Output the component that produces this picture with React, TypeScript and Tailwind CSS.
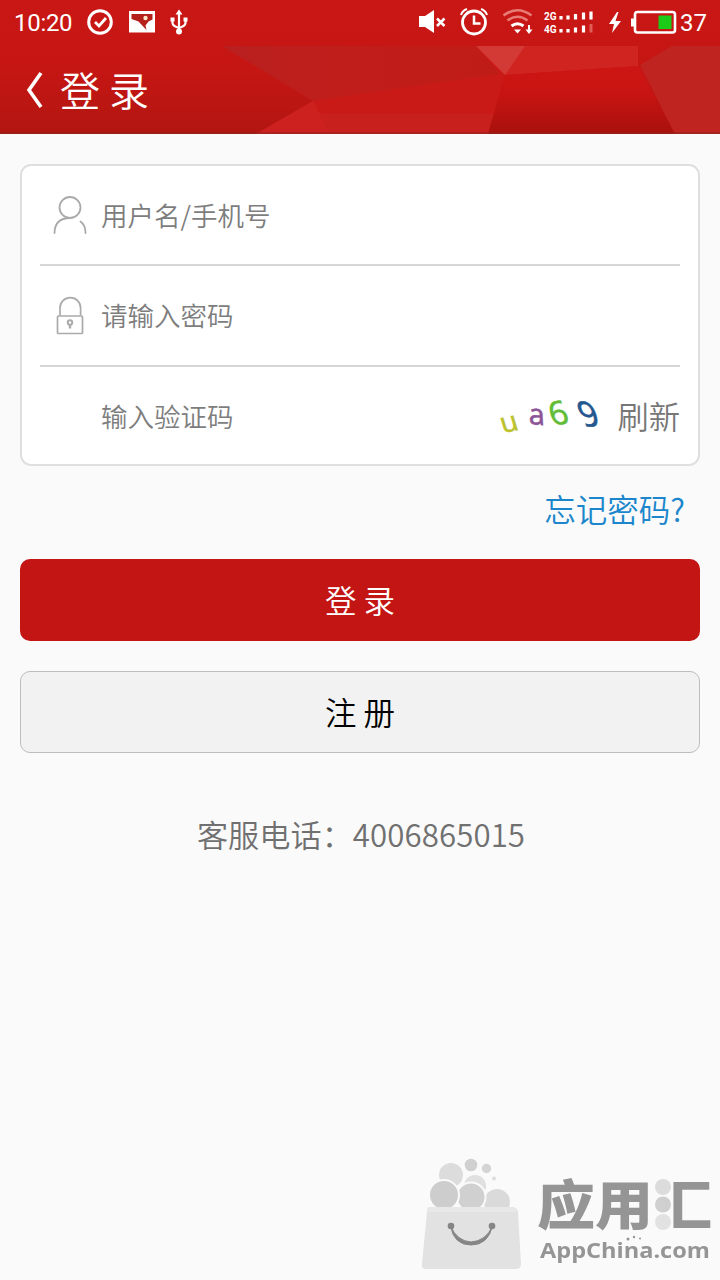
import { useState } from "react";

const HeaderBackground = () => (
  <svg className="absolute inset-0 w-full h-full" viewBox="0 0 720 134" preserveAspectRatio="none">
    <defs>
      <linearGradient id="base" x1="0" y1="0" x2="0" y2="1">
        <stop offset="0" stopColor="#c81715" />
        <stop offset="0.5" stopColor="#c61614" />
        <stop offset="1" stopColor="#b21611" />
      </linearGradient>
      <linearGradient id="shade" x1="0" y1="0" x2="1" y2="0">
        <stop offset="0" stopColor="#b8201f" />
        <stop offset="0.4" stopColor="#c01e1b" />
        <stop offset="1" stopColor="#c01c17" />
      </linearGradient>
      <linearGradient id="dark" x1="0" y1="0" x2="0" y2="1">
        <stop offset="0" stopColor="#cd1614" />
        <stop offset="0.4" stopColor="#c81412" />
        <stop offset="1" stopColor="#a8110d" />
      </linearGradient>
    </defs>
    <rect width="720" height="134" fill="url(#base)" />
    <path d="M222 46H476L505 75L488 134H256L313 101Z" fill="#c91a17" />
    <path d="M222 46H476L500 74L400 88L313 101Z" fill="url(#shade)" />
    <path d="M313 101L320 114H494L488 134H256Z" fill="#c8201c" />
    <path d="M313 101L330 134H256Z" fill="#cc211e" />
    <path d="M524 46H638V66L505 75Z" fill="#d02421" />
    <path d="M505 75L638 66L675 134H488Z" fill="url(#dark)" />
    <path d="M476 46H525L505 75Z" fill="#d33a36" />
    <path d="M672 46H720V134H675L640 65Z" fill="#c02420" />
    <rect y="132" width="720" height="2" fill="#93231d" fillOpacity="0.6" />
  </svg>
);

const StatusIcons = () => (
  <svg className="absolute left-0 top-0" width="720" height="46" viewBox="0 0 720 46" fill="none" stroke="#fff">
    {/* check, picture, usb */}
    <circle cx="100" cy="22" r="11.3" strokeWidth="3" />
    <path d="M95 22l4 4 7-8" strokeWidth="2.8" />
    <path d="M129 11h26v21.500h-26z" fill="#fff" stroke="none" />
    <path d="M131.500 14h21v5.500l-4 2-3 4 1 4.500-8-8.500-7-2.500z" fill="#b5201d" stroke="none" />
    <circle cx="145.500" cy="18" r="2.200" fill="#ffe6c8" stroke="none" />
    <path d="M179 12v20M172.500 19v4q0 3 6.500 5M185.500 19v4q0 3-6.500 5" strokeWidth="2.200" />
    <path d="M179 9.500l3.500 5h-7z" fill="#fff" stroke="none" />
    <circle cx="179" cy="31.500" r="3" fill="#fff" stroke="none" />
    <path d="M170.500 17.500h4v4h-4zM183.500 17.500h4v4h-4z" fill="#fff" stroke="none" />
    {/* mute, alarm */}
    <path d="M419 16h6l9-6v23l-9-6h-6z" fill="#fff" stroke="none" />
    <path d="M437 18.500l7.500 7.500M444.500 18.500l-7.500 7.500" strokeWidth="2.500" />
    <circle cx="474" cy="22.500" r="11.500" strokeWidth="2.800" />
    <path d="M474 15.500v8h6.500" strokeWidth="2.500" />
    <path d="M461 15q1.500-4.500 6-6M487 15q-1.500-4.500-6-6" strokeWidth="2" />
    {/* wifi */}
    <path d="M503.500 15.500q14-10.500 28 0M507.500 20.500q10-7.500 20 0" stroke="#e77b75" strokeWidth="2.600" />
    <path d="M511.500 26q6-4.500 12 0" strokeWidth="3" />
    <path d="M514 29.500h7l-3.500 4z" fill="#fff" stroke="none" />
    <path d="M529 25v5" strokeWidth="2" />
    <path d="M525.500 29.500h7l-3.500 4.500z" fill="#fff" stroke="none" />
    {/* signal bars */}
    <path d="M561 16v3.500M568 15.500v4M575.500 14v5.500M583.500 12.500v7M591 11.500v8M561 29v3.500M568 29v3.500M575.500 27.500v5M583.500 25.500v7" strokeWidth="3.200" />
    <path d="M591 24v8.500" stroke="#e05d58" strokeWidth="3" />
    {/* charging and battery */}
    <path d="M617 12l-8 12h5l-2 9 9-12h-5.500l3-9z" fill="#fff" stroke="none" />
    <rect x="635" y="12" width="40" height="20.500" rx="2.500" strokeWidth="2.600" />
    <path d="M631 18.500h3v8h-3z" fill="#fff" stroke="none" />
    <path d="M658.500 15.500h13v13.500h-13z" fill="#1ccb18" stroke="none" />
  </svg>
);

const UserIcon = () => (
  <svg width="34" height="40" viewBox="0 0 34 40" fill="none" stroke="#aaa" strokeWidth="1.800" strokeLinecap="round">
    <circle cx="17" cy="12.500" r="10.500" />
    <path d="M1.500 38Q1.800 23 17 23M27.500 26.500Q32.500 30 32.500 38" />
  </svg>
);

const LockIcon = () => (
  <svg width="28" height="40" viewBox="0 0 28 40" fill="none" stroke="#aaa" strokeWidth="1.700">
    <path d="M4 20.500V13a10.300 10.300 0 0 1 20.600 0v7.500" />
    <rect x="1.500" y="21" width="25" height="17.500" rx="1" />
    <circle cx="14" cy="27.500" r="2.200" strokeWidth="2" />
    <path d="M14 29.500v4" strokeWidth="2.400" />
  </svg>
);

const Captcha = () => (
  <svg width="118" height="70" viewBox="0 0 118 70" className="shrink-0 font-['Noto_Sans']" strokeWidth="0.5">
    <text transform="translate(4 52) rotate(-11) skewX(6)" fontSize="28" fill="#bcc22c" stroke="#bcc22c">u</text>
    <text transform="translate(30 43) rotate(5) skewX(8)" fontSize="29" fill="#8d5598" stroke="#8d5598">a</text>
    <text transform="translate(53 44) rotate(-4) skewX(12)" fontSize="33" fill="#62bd36" stroke="#62bd36">6</text>
    <text transform="translate(84 45) rotate(4) skewX(24)" fontSize="34" fill="#25578f" stroke="#25578f">9</text>
  </svg>
);

const BagLogo = () => (
  <svg width="104" height="114" viewBox="0 0 104 114">
    <circle cx="31" cy="17" r="12" fill="#dcdcdc" />
    <circle cx="51" cy="7" r="6.300" fill="#d0d0d0" />
    <circle cx="66.500" cy="10.500" r="4.700" fill="#d4d4d4" />
    <circle cx="74" cy="20.500" r="2" fill="#ddd" />
    <circle cx="55" cy="28" r="11" fill="#e0e0e0" />
    <circle cx="77" cy="44" r="14" fill="#dadada" stroke="#fafafa" strokeWidth="2" />
    <circle cx="51" cy="39" r="14.500" fill="#d0d0d0" stroke="#fafafa" strokeWidth="2" />
    <circle cx="24" cy="37" r="15" fill="#cdcdcd" stroke="#fafafa" strokeWidth="2" />
    <path d="M10 49H91Q97 49 98 54L101 106Q101 111 96 111H6Q1 111 2 106L7 54Q7 49 10 49Z" fill="#e2e2e2" />
    <path d="M10 49H92Q94 49 96 51V54H7Z" fill="#e8e8e8" />
    <circle cx="31" cy="68" r="3.300" fill="#858585" />
    <circle cx="72" cy="68" r="3.300" fill="#858585" />
    <path d="M30.500 68Q34 87 51 87Q68 87 72.500 68Q66 83 51 84Q37 83 30.500 68Z" fill="#858585" stroke="#858585" />
  </svg>
);

const Watermark = () => (
  <div className="flex h-[122px] pl-[420px] text-[#959595]">
    <BagLogo />
    <div className="relative ml-[13px] pt-[15px]">
      <div className="flex h-[58px] origin-center scale-y-[0.93] items-center text-[58px] leading-[58px] font-black">
        <span>应用</span>
        <span className="bg-[linear-gradient(90deg,transparent_34%,#959595_34%)] bg-clip-text pl-px text-transparent">汇</span>
      </div>
      <svg className="absolute left-[117px] top-5" width="20" height="56" viewBox="0 0 20 56">
        <circle cx="9" cy="9" r="8" fill="#dcdcdc" />
        <circle cx="9" cy="26.500" r="8" fill="#cfcfcf" />
        <circle cx="9" cy="44" r="8" fill="#e2e2e2" />
      </svg>
      <div className="mt-1 whitespace-nowrap pl-[3px] font-['Open_Sans'] text-[22px] leading-7 font-bold">
        <span className="inline-block origin-left scale-x-[1.07]">AppChina.com</span>
      </div>
      <svg className="absolute left-[88px] top-[77px]" width="20" height="6" viewBox="0 0 20 6" fill="#959595">
        <circle cx="3" cy="4" r="1.500" />
        <circle cx="9" cy="2" r="1.200" />
        <circle cx="15" cy="3.500" r="1" />
      </svg>
    </div>
  </div>
);

export default function App() {
  const [username, setUsername] = useState("");
  const [password, setPassword] = useState("");
  const [code, setCode] = useState("");

  const inputClass =
    "min-w-0 flex-1 bg-transparent pl-px text-[26.500px] font-[350] text-[#555] outline-none placeholder:text-[#7d7d7d]";

  return (
    <div className="flex h-[1280px] w-[720px] flex-col overflow-hidden bg-[#fafafa] font-['Noto_Sans_CJK_SC',sans-serif]">
      {/* Header */}
      <header className="relative h-[134px] shrink-0 text-white">
        <HeaderBackground />
        <StatusIcons />
        <div className="relative flex h-[46px] items-center justify-between pl-[14px] pr-[13px] font-[Roboto] text-[24px]">
          <span className="tracking-[-0.3px]">10:20</span>
          <div className="flex items-center">
            <span className="mr-[124px] flex w-3 flex-col text-[10px] leading-[13px] font-bold">
              <span>2G</span>
              <span>4G</span>
            </span>
            <span className="w-[27px]">37</span>
          </div>
        </div>
        <div className="relative flex h-[88px] items-center pl-6">
          <svg width="20" height="38" viewBox="0 0 20 38" fill="none" stroke="#fff" strokeWidth="3.600">
            <path d="M17 2L5 19L17 36" />
          </svg>
          <h1 className="ml-4 pb-[3px] text-[40px] font-[350]">登 录</h1>
        </div>
      </header>

      {/* Login form */}
      <main className="px-5 pt-[30px]">
        <div className="h-[302px] rounded-[11px] border-2 border-[#dfdfdf] bg-white px-[18px]">
          <div className="flex h-[99.500px] items-center border-b-2 border-[#d6d6d6]">
            <span className="flex w-[60px] justify-center">
              <UserIcon />
            </span>
            <input className={inputClass} placeholder="用户名/手机号" value={username} onChange={(e) => setUsername(e.target.value)} />
          </div>
          <div className="flex h-[101px] items-center border-b-2 border-[#d6d6d6]">
            <span className="flex w-[60px] justify-center">
              <LockIcon />
            </span>
            <input className={inputClass} type="password" placeholder="请输入密码" value={password} onChange={(e) => setPassword(e.target.value)} />
          </div>
          <div className="flex h-[99px] items-center pl-[60px]">
            <input className={inputClass} placeholder="输入验证码" value={code} onChange={(e) => setCode(e.target.value)} />
            <Captcha />
            <button className="text-[31.300px] font-[350] text-[#777]">刷新</button>
          </div>
        </div>

        <div className="flex h-[93px] items-center justify-end pr-[15px]">
          <a href="#" className="pb-2 text-[31.500px] font-[350] text-[#1b86cb]">
            忘记密码?
          </a>
        </div>

        <button className="block h-[82px] w-full rounded-[10px] bg-[#c31513] text-[31.500px] font-[350] text-white">登 录</button>
        <button className="mt-[30px] block h-[82px] w-full rounded-[10px] border border-[#bdbdbd] bg-[#f2f2f2] text-[31.500px] font-[350] text-black">注 册</button>

        <p className="mt-[58px] pl-0.5 text-center text-[31.200px] font-[350] text-[#707070]">
          客服电话：<span className="tracking-[0.1px]">4006865015</span>
        </p>
      </main>

      <div className="mt-auto">
        <Watermark />
      </div>
    </div>
  );
}
